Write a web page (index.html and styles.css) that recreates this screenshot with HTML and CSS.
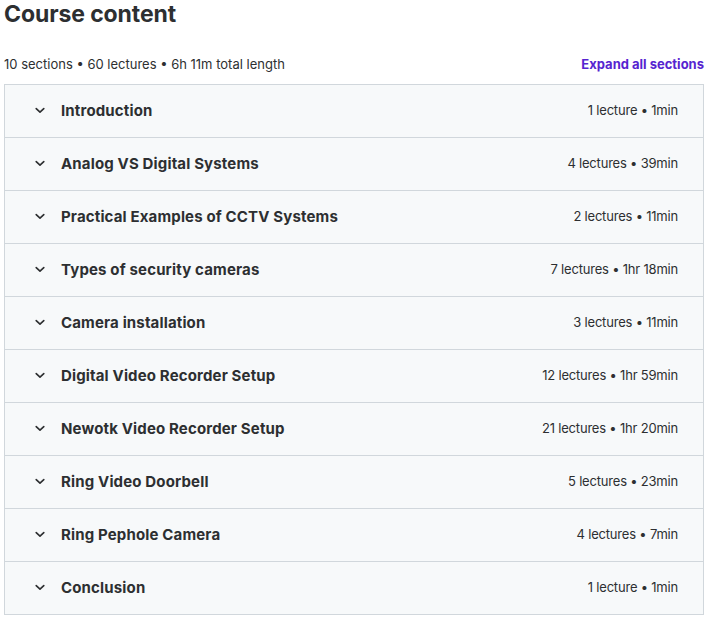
FILE: index.html
```html
<!DOCTYPE html>
<html>
<head>
<meta charset="utf-8">
<link rel="stylesheet" href="styles.css">
</head>
<body>
<div class="page">
  <h2 class="title">Course content</h2>
  <div class="meta">
    <span class="stats">10 sections • 60 lectures • 6h 11m total length</span>
    <button class="expand">Expand all sections</button>
  </div>
  <div class="sections">
    <div class="row"><span class="chev"><svg viewBox="0 0 24 24" width="14" height="14"><path d="M5.5 9.5l6.5 6 6.5-6" fill="none" stroke="currentColor" stroke-width="2.8" stroke-linecap="round" stroke-linejoin="round"/></svg></span><span class="name">Introduction</span><span class="info">1 lecture • 1min</span></div>
    <div class="row"><span class="chev"><svg viewBox="0 0 24 24" width="14" height="14"><path d="M5.5 9.5l6.5 6 6.5-6" fill="none" stroke="currentColor" stroke-width="2.8" stroke-linecap="round" stroke-linejoin="round"/></svg></span><span class="name">Analog VS Digital Systems</span><span class="info">4 lectures • 39min</span></div>
    <div class="row"><span class="chev"><svg viewBox="0 0 24 24" width="14" height="14"><path d="M5.5 9.5l6.5 6 6.5-6" fill="none" stroke="currentColor" stroke-width="2.8" stroke-linecap="round" stroke-linejoin="round"/></svg></span><span class="name">Practical Examples of CCTV Systems</span><span class="info">2 lectures • 11min</span></div>
    <div class="row"><span class="chev"><svg viewBox="0 0 24 24" width="14" height="14"><path d="M5.5 9.5l6.5 6 6.5-6" fill="none" stroke="currentColor" stroke-width="2.8" stroke-linecap="round" stroke-linejoin="round"/></svg></span><span class="name">Types of security cameras</span><span class="info">7 lectures • 1hr 18min</span></div>
    <div class="row"><span class="chev"><svg viewBox="0 0 24 24" width="14" height="14"><path d="M5.5 9.5l6.5 6 6.5-6" fill="none" stroke="currentColor" stroke-width="2.8" stroke-linecap="round" stroke-linejoin="round"/></svg></span><span class="name">Camera installation</span><span class="info">3 lectures • 11min</span></div>
    <div class="row"><span class="chev"><svg viewBox="0 0 24 24" width="14" height="14"><path d="M5.5 9.5l6.5 6 6.5-6" fill="none" stroke="currentColor" stroke-width="2.8" stroke-linecap="round" stroke-linejoin="round"/></svg></span><span class="name">Digital Video Recorder Setup</span><span class="info">12 lectures • 1hr 59min</span></div>
    <div class="row"><span class="chev"><svg viewBox="0 0 24 24" width="14" height="14"><path d="M5.5 9.5l6.5 6 6.5-6" fill="none" stroke="currentColor" stroke-width="2.8" stroke-linecap="round" stroke-linejoin="round"/></svg></span><span class="name">Newotk Video Recorder Setup</span><span class="info">21 lectures • 1hr 20min</span></div>
    <div class="row"><span class="chev"><svg viewBox="0 0 24 24" width="14" height="14"><path d="M5.5 9.5l6.5 6 6.5-6" fill="none" stroke="currentColor" stroke-width="2.8" stroke-linecap="round" stroke-linejoin="round"/></svg></span><span class="name">Ring Video Doorbell</span><span class="info">5 lectures • 23min</span></div>
    <div class="row"><span class="chev"><svg viewBox="0 0 24 24" width="14" height="14"><path d="M5.5 9.5l6.5 6 6.5-6" fill="none" stroke="currentColor" stroke-width="2.8" stroke-linecap="round" stroke-linejoin="round"/></svg></span><span class="name">Ring Pephole Camera</span><span class="info">4 lectures • 7min</span></div>
    <div class="row"><span class="chev"><svg viewBox="0 0 24 24" width="14" height="14"><path d="M5.5 9.5l6.5 6 6.5-6" fill="none" stroke="currentColor" stroke-width="2.8" stroke-linecap="round" stroke-linejoin="round"/></svg></span><span class="name">Conclusion</span><span class="info">1 lecture • 1min</span></div>
  </div>
</div>
</body>
</html>
```
FILE: styles.css
```css
html, body {
  margin: 0;
  padding: 0;
  background: #ffffff;
}
body {
  font-family: Inter, "Noto Sans", "Liberation Sans", sans-serif;
  color: #2d2f31;
}
.page {
  width: 700px;
  padding-left: 4px;
}
.title {
  margin: 0;
  font-size: 23px;
  font-weight: 700;
  line-height: 28px;
  letter-spacing: -0.1px;
}
.meta {
  margin-top: 16px;
  height: 40px;
  display: flex;
  align-items: center;
  justify-content: space-between;
}
.stats {
  font-size: 13px;
  color: #2d2f31;
}
.expand {
  border: 0;
  background: none;
  padding: 0;
  font-family: inherit;
  font-size: 13px;
  font-weight: 700;
  color: #5624d0;
}
.sections {
  border: 1px solid #d1d7dc;
  border-bottom: 0;
}
.row {
  display: flex;
  align-items: center;
  height: 50px;
  border-bottom: 1px solid #d1d7dc;
  background: #f7f9fa;
  padding: 0 25px 2px 28px;
}
.chev {
  width: 14px;
  height: 14px;
  display: flex;
  color: #2d2f31;
  margin-right: 14px;
}
.name {
  flex: 1;
  font-size: 15px;
  font-weight: 700;
  letter-spacing: 0.15px;
}
.info {
  font-size: 13px;
  letter-spacing: -0.2px;
  color: #2d2f31;
}
```
